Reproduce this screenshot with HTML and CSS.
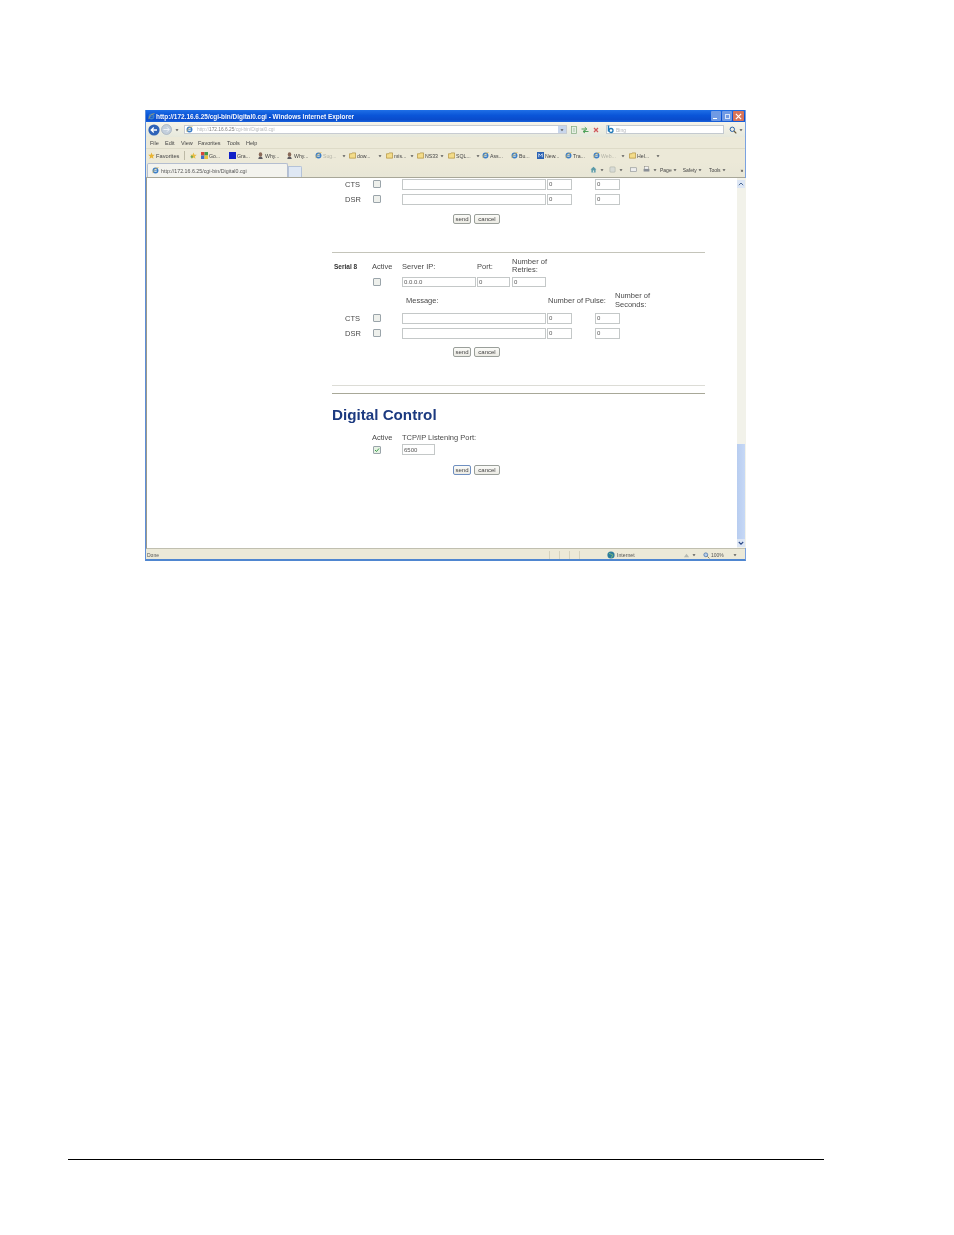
FILE: index.html
```html
<!DOCTYPE html>
<html lang="en">
<head>
<meta charset="utf-8">
<title>Digital Control</title>
<link rel="stylesheet" href="styles.css">
</head>
<body>
<svg class="defs" width="0" height="0" aria-hidden="true">
  <defs>
    <symbol id="ie" viewBox="0 0 8 8"><circle cx="4" cy="4" r="2.600" fill="none" stroke="#3c7fc8" stroke-width="1.500"/><path d="M1 4.300h6" stroke="#3c7fc8"/><path d="M1 7C.5 5 4 1 7.500.5" fill="none" stroke="#e2b33c" stroke-width=".7"/></symbol>
    <symbol id="folder" viewBox="0 0 8 8"><path d="M.5 2h2.500l.7-1h3.800v6H.5z" fill="#f3dc8a" stroke="#a8862c" stroke-width=".7"/></symbol>
    <symbol id="head" viewBox="0 0 8 8"><ellipse cx="4" cy="2.800" rx="2" ry="2.500" fill="#8a6a58"/><path d="M1.500 8c0-2 1-2.600 2.500-2.600S6.500 6 6.500 8z" fill="#5c5a60"/></symbol>
    <symbol id="blue" viewBox="0 0 8 8"><rect width="8" height="8" fill="#1020c8"/></symbol>
    <symbol id="newsico" viewBox="0 0 8 8"><rect width="8" height="8" fill="#2a62b4"/><path d="M2 6V2l2 2 2-2v4" fill="none" stroke="#fff" stroke-width=".8"/></symbol>
    <symbol id="goog" viewBox="0 0 8 8"><rect width="4" height="4" fill="#d8443a"/><rect x="4" width="4" height="4" fill="#3f9a4c"/><rect y="4" width="4" height="4" fill="#3f6ec8"/><rect x="4" y="4" width="4" height="4" fill="#eac23e"/></symbol>
    <symbol id="star" viewBox="0 0 8 8"><path d="M4 .5 5 3l2.700.2L5.600 5l.7 2.600L4 6.200 1.700 7.600 2.400 5 .3 3.200 3 3z" fill="#e8b432"/></symbol>
    <symbol id="addfav" viewBox="0 0 8 8"><path d="M4 .5 5 3l2.700.2L5.600 5l.7 2.600L4 6.200 1.700 7.600 2.400 5 .3 3.200 3 3z" fill="#e8bc42"/><path d="M.5 5.500h3M2 4v3" stroke="#4a9a48" stroke-width=".9"/></symbol>
    <symbol id="house" viewBox="0 0 8 8"><path d="M4 .8.6 4h1v3.400h4.800V4h1z" fill="#5a9aa8"/><path d="M3.300 7.400V5h1.400v2.400z" fill="#e4e8e0"/></symbol>
    <symbol id="caret" viewBox="0 0 4 4"><path d="M.5 1.200h3L2 3.200z" fill="#555"/></symbol>
  </defs>
</svg>

<main class="browser">
  <header class="titlebar">
    <svg class="ico title-ico"><use href="#ie"/></svg>
    <span class="title-text">http://172.16.6.25/cgi-bin/Digital0.cgi - Windows Internet Explorer</span>
    <span class="winbtns">
      <span class="winbtn"><i class="min-mark"></i></span>
      <span class="winbtn"><i class="max-mark"></i></span>
      <span class="winbtn winclose">
        <svg viewBox="0 0 8 8" width="7" height="7"><path d="M1 1l6 6M7 1l-6 6" stroke="#fff" stroke-width="1.400"/></svg>
      </span>
    </span>
  </header>

  <div class="addressbar">
    <svg class="nav-btn" viewBox="0 0 12 12" width="12" height="12"><circle cx="6" cy="6" r="5.600" fill="#2f63b8"/><path d="M9 6H3.500M5.800 3.500 3.200 6l2.600 2.500" fill="none" stroke="#fff" stroke-width="1.300"/></svg>
    <svg class="nav-btn fwd" viewBox="0 0 11 11" width="11" height="11"><circle cx="5.500" cy="5.500" r="5" fill="#c3cfdc" stroke="#93a3b5" stroke-width=".6"/><path d="M2.500 5.500h5.500M6 3.300l2.200 2.200L6 7.700" fill="none" stroke="#eef2f6" stroke-width="1"/></svg>
    <svg class="caret nav-caret"><use href="#caret"/></svg>
    <div class="addr-field">
      <svg class="ico"><use href="#ie"/></svg>
      <span class="addr-text">http://<b>172.16.6.25</b>/cgi-bin/Digital0.cgi</span>
      <span class="addr-drop"><svg class="caret"><use href="#caret"/></svg></span>
    </div>
    <svg class="addr-ico" viewBox="0 0 8 8" width="8" height="8"><rect x="1.500" y=".5" width="5" height="7" fill="#e6f0e4" stroke="#7fa87c" stroke-width=".7"/><path d="M3 3h2M3 5h2" stroke="#7fa87c" stroke-width=".6"/></svg>
    <svg class="addr-ico" viewBox="0 0 8 8" width="8" height="8"><path d="M.5 3h5M3.800 1.200 5.800 3 3.800 4.800M7.500 5.500h-5M4 4 2 5.500 4 7" fill="none" stroke="#3f9a4c" stroke-width=".9"/></svg>
    <svg class="addr-ico" viewBox="0 0 8 8" width="8" height="8"><path d="M2 2l4 4M6 2 2 6" stroke="#d0555a" stroke-width="1.200"/></svg>
    <div class="search-field">
      <svg viewBox="0 0 8 9" width="8" height="9"><path d="M1.500.5v6" stroke="#1c78b8" stroke-width="1.500"/><circle cx="4" cy="5.500" r="2" fill="none" stroke="#1c78b8" stroke-width="1.300"/></svg>
      <span class="search-text">Bing</span>
    </div>
    <svg class="search-btn" viewBox="0 0 8 8" width="8" height="8"><circle cx="3.300" cy="3.300" r="2.200" fill="none" stroke="#2c62a8" stroke-width="1"/><path d="M5 5l2.300 2.300" stroke="#6a5a38" stroke-width="1.200"/></svg>
    <svg class="caret"><use href="#caret"/></svg>
  </div>

  <nav class="menubar">
    <span class="menu-file">File</span><span class="menu-edit">Edit</span><span class="menu-view">View</span><span class="menu-fav">Favorites</span><span class="menu-tools">Tools</span><span>Help</span>
  </nav>

  <div class="favbar">
    <span class="fav-title"><svg class="ico"><use href="#star"/></svg>Favorites</span>
    <i class="fav-sep"></i>
    <svg class="ico"><use href="#addfav"/></svg>
    <span class="fav"><svg class="ico"><use href="#goog"/></svg>Go...</span>
    <span class="fav"><svg class="ico"><use href="#blue"/></svg>Gra...</span>
    <span class="fav"><svg class="ico"><use href="#head"/></svg>Why...</span>
    <span class="fav"><svg class="ico"><use href="#head"/></svg>Why...</span>
    <span class="fav fav-dim"><svg class="ico"><use href="#ie"/></svg>Sug...</span>
    <svg class="caret"><use href="#caret"/></svg>
    <span class="fav"><svg class="ico"><use href="#folder"/></svg>dow...</span>
    <svg class="caret"><use href="#caret"/></svg>
    <span class="fav"><svg class="ico"><use href="#folder"/></svg>mis...</span>
    <svg class="caret"><use href="#caret"/></svg>
    <span class="fav"><svg class="ico"><use href="#folder"/></svg>NS33</span>
    <svg class="caret"><use href="#caret"/></svg>
    <span class="fav"><svg class="ico"><use href="#folder"/></svg>SQL...</span>
    <svg class="caret"><use href="#caret"/></svg>
    <span class="fav"><svg class="ico"><use href="#ie"/></svg>Ass...</span>
    <span class="fav"><svg class="ico"><use href="#ie"/></svg>Bu...</span>
    <span class="fav"><svg class="ico"><use href="#newsico"/></svg>New...</span>
    <span class="fav"><svg class="ico"><use href="#ie"/></svg>Tra...</span>
    <span class="fav fav-dim"><svg class="ico"><use href="#ie"/></svg>Web...</span>
    <svg class="caret"><use href="#caret"/></svg>
    <span class="fav"><svg class="ico"><use href="#folder"/></svg>Hel...</span>
    <svg class="caret"><use href="#caret"/></svg>
  </div>

  <div class="tabbar">
    <div class="tab"><svg class="ico"><use href="#ie"/></svg><span>http://172.16.6.25/cgi-bin/Digital0.cgi</span></div>
    <div class="newtab"></div>
    <div class="cmds">
      <svg class="ico"><use href="#house"/></svg>
      <svg class="caret cmd-gap"><use href="#caret"/></svg>
      <svg class="ico cmd-feed" viewBox="0 0 8 8"><rect x="1" y="1" width="6" height="6" rx="1" fill="#d8dbd6" stroke="#a4a8a2" stroke-width=".6"/></svg>
      <svg class="caret cmd-gap"><use href="#caret"/></svg>
      <svg class="ico cmd-mail" viewBox="0 0 8 8"><rect x=".5" y="2" width="7" height="4.500" fill="#eee" stroke="#8a8f92" stroke-width=".7"/></svg>
      <svg class="ico cmd-print" viewBox="0 0 8 8"><rect x="2" y=".8" width="4" height="3" fill="#f2f2f2" stroke="#777" stroke-width=".5"/><rect x=".7" y="3.300" width="6.600" height="3" fill="#8a8f96"/></svg>
      <svg class="caret cmd-gap"><use href="#caret"/></svg>
      <span class="cmd cmd-page">Page <svg class="caret"><use href="#caret"/></svg></span>
      <span class="cmd cmd-safety">Safety <svg class="caret"><use href="#caret"/></svg></span>
      <span class="cmd cmd-tools">Tools <svg class="caret"><use href="#caret"/></svg></span>
      <span class="chevrons">»</span>
    </div>
  </div>

  <div class="viewport">
    <form class="form">
      <div class="row row-msg row-first">
        <label class="sig">CTS</label><span class="check"></span><input class="text" value=""><input class="text" value="0"><i></i><input class="text" value="0">
      </div>
      <div class="row row-msg row-next">
        <label class="sig">DSR</label><span class="check"></span><input class="text" value=""><input class="text" value="0"><i></i><input class="text" value="0">
      </div>
      <div class="buttons buttons-a"><button type="button" class="btn btn-send">send</button><button type="button" class="btn btn-cancel">cancel</button></div>
      <hr class="rule rule-a">

      <div class="row row-ip head-serial">
        <b class="serial">Serial 8</b><span>Active</span><span>Server IP:</span><span>Port:</span><span class="two-line">Number of Retries:</span>
      </div>
      <div class="row row-ip row-ip-input">
        <i></i><span class="check"></span><input class="text" value="0.0.0.0"><input class="text text-port" value="0"><input class="text" value="0">
      </div>
      <div class="row head-msg">
        <i></i><i></i><span class="msg-label">Message:</span><span class="pulse-label">Number of Pulse:</span><span class="two-line">Number of Seconds:</span>
      </div>
      <div class="row row-msg row-cts">
        <label class="sig">CTS</label><span class="check"></span><input class="text" value=""><input class="text" value="0"><i></i><input class="text" value="0">
      </div>
      <div class="row row-msg row-next">
        <label class="sig">DSR</label><span class="check"></span><input class="text" value=""><input class="text" value="0"><i></i><input class="text" value="0">
      </div>
      <div class="buttons buttons-b"><button type="button" class="btn btn-send">send</button><button type="button" class="btn btn-cancel">cancel</button></div>
      <hr class="rule rule-light">
      <hr class="rule rule-dark">

      <h1 class="heading">Digital Control</h1>
      <div class="row row-tcp tcp-head"><i></i><span>Active</span><span>TCP/IP Listening Port:</span></div>
      <div class="row row-tcp tcp-input">
        <i></i>
        <span class="check check-on"><svg viewBox="0 0 8 8" width="8" height="8"><path d="M2 4l1.500 1.500L6 2.500" fill="none" stroke="#3c9a4c" stroke-width="1"/></svg></span>
        <input class="text text-tcp" value="6500">
      </div>
      <div class="buttons buttons-c"><button type="button" class="btn btn-send btn-focus">send</button><button type="button" class="btn btn-cancel">cancel</button></div>
    </form>
    <aside class="scrollbar">
      <span class="sb-arrow"><svg viewBox="0 0 6 4" width="6" height="4"><path d="M.8 3.200 3 1l2.200 2.200" fill="none" stroke="#4a6a98" stroke-width="1"/></svg></span>
      <span class="sb-track"></span>
      <span class="sb-thumb"></span>
      <span class="sb-arrow"><svg viewBox="0 0 6 4" width="6" height="4"><path d="M.8 1 3 3.200 5.200 1" fill="none" stroke="#2c4a88" stroke-width="1.100"/></svg></span>
    </aside>
  </div>

  <footer class="statusbar">
    <span class="status-done">Done</span>
    <i class="status-cell"></i><i class="status-cell"></i><i class="status-cell"></i><i class="status-cell"></i>
    <span class="status-zone"><svg viewBox="0 0 8 8" width="8" height="8"><circle cx="4" cy="4" r="3.600" fill="#2d7d9c"/><path d="M2 2.500c1.500 0 2 1 3 1s1 2-1 3" fill="none" stroke="#7fc07a" stroke-width="1"/></svg>Internet</span>
    <svg class="ico status-lock" viewBox="0 0 8 8"><path d="M1 6l3-4 3 4z" fill="#b6bab2"/></svg>
    <svg class="caret status-caret"><use href="#caret"/></svg>
    <span class="status-zoom"><svg viewBox="0 0 8 8" width="7" height="7"><circle cx="3.200" cy="3.200" r="2.200" fill="#bcd0e8" stroke="#3a68a8" stroke-width=".8"/><path d="M5 5l2.300 2.300" stroke="#887850" stroke-width="1"/></svg>100%</span>
    <svg class="caret status-caret2"><use href="#caret"/></svg>
  </footer>
</main>

<div class="page-rule"></div>
</body>
</html>
```

FILE: styles.css
```css
* { box-sizing: border-box; }
html, body { margin: 0; padding: 0; background: #fff; }
body {
  width: 954px;
  height: 1235px;
  overflow: hidden;
  padding-top: 110px;
  font-family: "Liberation Sans", Arial, sans-serif;
}
.defs { position: absolute; }

.browser {
  width: 601px;
  height: 451px;
  margin-left: 145px;
  display: flex;
  flex-direction: column;
  background: #ece9d8;
  filter: blur(0.4px);
  border-left: 1px solid #5f8fd8;
  border-right: 1px solid #7aa2e0;
  border-bottom: 2px solid #4f86d0;
  font-size: 5.500px;
  color: #444;
}
.ico { width: 7px; height: 7px; flex: none; display: block; }
.caret { width: 4px; height: 4px; flex: none; display: block; }

.titlebar {
  height: 12px;
  flex: none;
  display: flex;
  align-items: center;
  padding-left: 2px;
  background: linear-gradient(#1f6fe6 0%, #0a55d8 45%, #0a4ccc 80%, #1a63dc 100%);
  color: #f4f6fc;
  font-weight: bold;
  font-size: 6.450px;
}
.title-ico { margin-right: 1px; }
.title-text { white-space: nowrap; }
.winbtns { margin-left: auto; display: flex; gap: 1px; padding-right: 1px; }
.winbtn {
  width: 10px;
  height: 10px;
  border-radius: 1px;
  background: #6f9ae4;
  display: flex;
  align-items: center;
  justify-content: center;
}
.winclose { width: 11px; background: #d8745a; }
.min-mark { display: block; width: 4px; height: 1px; background: #fff; margin-top: 5px; margin-right: 2px; }
.max-mark { display: block; width: 5px; height: 5px; border: 1px solid #d8e4f8; }

.addressbar {
  height: 15px;
  flex: none;
  display: flex;
  align-items: center;
  padding-left: 2px;
  background: linear-gradient(#f6f4ea, #e6e8dc);
}
.nav-btn { flex: none; }
.fwd { margin-left: 1px; }
.nav-caret { margin-left: 3px; }
.addr-field {
  width: 383px;
  height: 9px;
  margin-left: 5px;
  padding-left: 1px;
  display: flex;
  align-items: center;
  gap: 4px;
  background: #fff;
  border: 1px solid #c8ccd2;
  flex: none;
}
.addr-text { color: #b8bbbe; font-size: 4.800px; white-space: nowrap; }
.addr-text b { color: #808080; font-weight: normal; }
.addr-drop {
  margin-left: auto;
  width: 8px;
  height: 7px;
  background: #c8d6ec;
  display: flex;
  align-items: center;
  justify-content: center;
}
.addr-ico { flex: none; margin-left: 3px; }
.search-field {
  width: 118px;
  height: 9px;
  margin-left: 6px;
  flex: none;
  display: flex;
  align-items: center;
  gap: 1px;
  background: #fff;
  border: 1px solid #c4cad0;
}
.search-text { color: #b4b8bc; font-size: 5px; }
.search-btn { margin-left: 5px; margin-right: 2px; flex: none; }

.menubar {
  height: 12px;
  flex: none;
  display: flex;
  align-items: center;
  padding-left: 4px;
  font-size: 5.500px;
  background: #ece9d8;
  border-bottom: 1px solid #dedbc8;
}
.menu-file { width: 15px; }
.menu-edit { width: 16px; }
.menu-view { width: 17px; }
.menu-fav { width: 29px; }
.menu-tools { width: 19px; }

.favbar {
  height: 13px;
  flex: none;
  display: grid;
  grid-template-columns: 36px 6px 11px 28px 28px 29px 29px 27px 7px 29px 8px 24px 7px 23px 8px 28px 6px 29px 26px 28px 28px 28px 8px 27px 8px;
  align-items: center;
  padding-left: 2px;
  background: #ece9d8;
  font-size: 5.200px;
  white-space: nowrap;
}
.fav-title { display: flex; align-items: center; gap: 1px; font-size: 5.700px; }
.fav-sep { display: block; width: 1px; height: 9px; background: #bdbaa6; }
.fav { display: flex; align-items: center; gap: 1px; }
.fav-dim { color: #b4b4a8; }

.tabbar {
  height: 16px;
  flex: none;
  display: flex;
  align-items: flex-end;
  padding-left: 1px;
  background: linear-gradient(#ece9d8, #e8e6d6);
  border-bottom: 1px solid #a8a798;
}
.tab {
  width: 141px;
  height: 14px;
  display: flex;
  align-items: center;
  gap: 2px;
  padding-left: 4px;
  font-size: 5.300px;
  color: #555;
  white-space: nowrap;
  background: #f3f3ee;
  border: 1px solid #b4bed0;
  border-bottom: 0;
  border-radius: 2px 2px 0 0;
}
.newtab {
  width: 14px;
  height: 11px;
  background: #dfe8f4;
  border: 1px solid #b4c2d8;
  border-bottom: 0;
  border-radius: 0 2px 0 0;
}
.cmds {
  align-self: center;
  display: flex;
  align-items: center;
  margin-left: 288px;
  font-size: 5px;
  white-space: nowrap;
}
.cmd-gap { margin-left: 3px; }
.cmd-feed { margin-left: 5px; }
.cmd-mail { margin-left: 7px; }
.cmd-print { margin-left: 6px; }
.cmd { display: flex; align-items: center; gap: 1px; }
.cmd-page { margin-left: 3px; }
.cmd-safety { margin-left: 6px; }
.cmd-tools { margin-left: 7px; }
.chevrons { margin-left: 15px; font-weight: bold; }

.viewport {
  flex: 1;
  display: flex;
  min-height: 0;
  background: #fff;
  border-left: 1px solid #9a9a8e;
  border-bottom: 1px solid #c0bfb0;
}
.form {
  width: 590px;
  flex: none;
  padding-left: 185px;
  padding-top: 1px;
  font-size: 7.500px;
  color: #4a4a4a;
}
.row { display: grid; align-items: center; }
.row-msg { grid-template-columns: 40px 30px 145px 25px 23px 25px; height: 10.500px; }
.row-ip { grid-template-columns: 40px 30px 75px 35px 60px; }
.head-msg { grid-template-columns: 40px 30px 145px 68px 50px; height: 17px; margin-top: 5px; }
.row-tcp { grid-template-columns: 40px 30px 100px; }
.row-first { margin-top: 0; }
.row-next { margin-top: 4.500px; }
.row-cts { margin-top: 4px; }
.sig { padding-left: 13px; }
.check {
  display: block;
  width: 8px;
  height: 8px;
  margin-left: 1px;
  border: 1px solid #9aa4aa;
  border-radius: 1px;
  background: #eef0ec;
}
.check-on { background: #e6f2e4; }
.check-on svg { display: block; margin: -1px; }
.text {
  display: block;
  height: 100%;
  padding: 0 1px;
  font: 6px "Liberation Sans", sans-serif;
  color: #555;
  background: #fff;
  border: 1px solid #c4c8c8;
  border-radius: 0;
  min-width: 0;
  width: 100%;
  outline: 0;
}
.row-msg .text:nth-of-type(1) { width: 144px; }
.row-ip-input { height: 10px; margin-top: 2px; }
.row-ip-input .text:first-of-type { width: 74px; }
.text-port { width: 33px; }
.row-ip-input .text:last-of-type { width: 34px; }
.head-serial { height: 18px; margin-top: 4px; }
.serial { font-size: 6.500px; color: #333; padding-left: 2px; }
.two-line { display: block; width: 38px; line-height: 8.500px; }
.msg-label { padding-left: 4px; }
.pulse-label { padding-left: 1px; white-space: nowrap; }

.buttons { display: flex; gap: 3px; padding-left: 121px; height: 10px; }
.buttons-a { margin-top: 9.500px; }
.buttons-b { margin-top: 8px; }
.buttons-c { margin-top: 10px; }
.btn {
  display: block;
  height: 100%;
  padding: 0;
  font: 6px "Liberation Sans", Arial, sans-serif;
  color: #444;
  background: linear-gradient(#fbfbf8, #ecebe4);
  border: 1px solid #9a9f9a;
  border-radius: 2px;
}
.btn-send { width: 18px; }
.btn-cancel { width: 26px; }
.btn-focus { border-color: #6f8fc0; }

.rule { display: block; height: 1px; border: 0; margin: 0; width: 373px; }
.rule-a { margin-top: 28px; background: #c4c4ba; }
.rule-light { margin-top: 28.500px; background: #dcdcd6; }
.rule-dark { margin-top: 6.500px; background: #a8a898; }
.heading {
  margin: 13.500px 0 0;
  font-size: 15.200px;
  line-height: 16px;
  font-weight: bold;
  color: #1c3a80;
}
.tcp-head { height: 10px; margin-top: 9px; }
.tcp-input { height: 11px; margin-top: 2px; }
.text-tcp { width: 33px; }

.scrollbar {
  flex: 1;
  display: flex;
  flex-direction: column;
  align-items: center;
  background: #f2f2ea;
  padding: 2px 1px 1px 0;
}
.sb-arrow {
  flex: none;
  width: 8px;
  height: 8px;
  display: flex;
  align-items: center;
  justify-content: center;
  background: #dde6f4;
}
.sb-track { flex: none; height: 256px; }
.sb-thumb { flex: 1; width: 8px; background: linear-gradient(90deg, #b8cdf0, #c6d8f6); }

.statusbar {
  flex: none;
  height: 10px;
  display: flex;
  align-items: center;
  padding: 2px 0 0 1px;
  font-size: 5px;
  background: #ece9d8;
  color: #555;
  white-space: nowrap;
}
.status-done { width: 402px; }
.status-cell { display: block; width: 10px; height: 8px; border-left: 1px solid #d4d1be; }
.status-zone { display: flex; align-items: center; gap: 2px; margin-left: 18px; width: 76px; font-size: 5.200px; }
.status-caret { margin-left: 2px; }
.status-zoom { display: flex; align-items: center; gap: 1px; margin-left: 7px; }
.status-caret2 { margin-left: 9px; }

.page-rule {
  width: 756px;
  height: 1px;
  margin-top: 598px;
  margin-left: 68px;
  background: #000;
}
```
